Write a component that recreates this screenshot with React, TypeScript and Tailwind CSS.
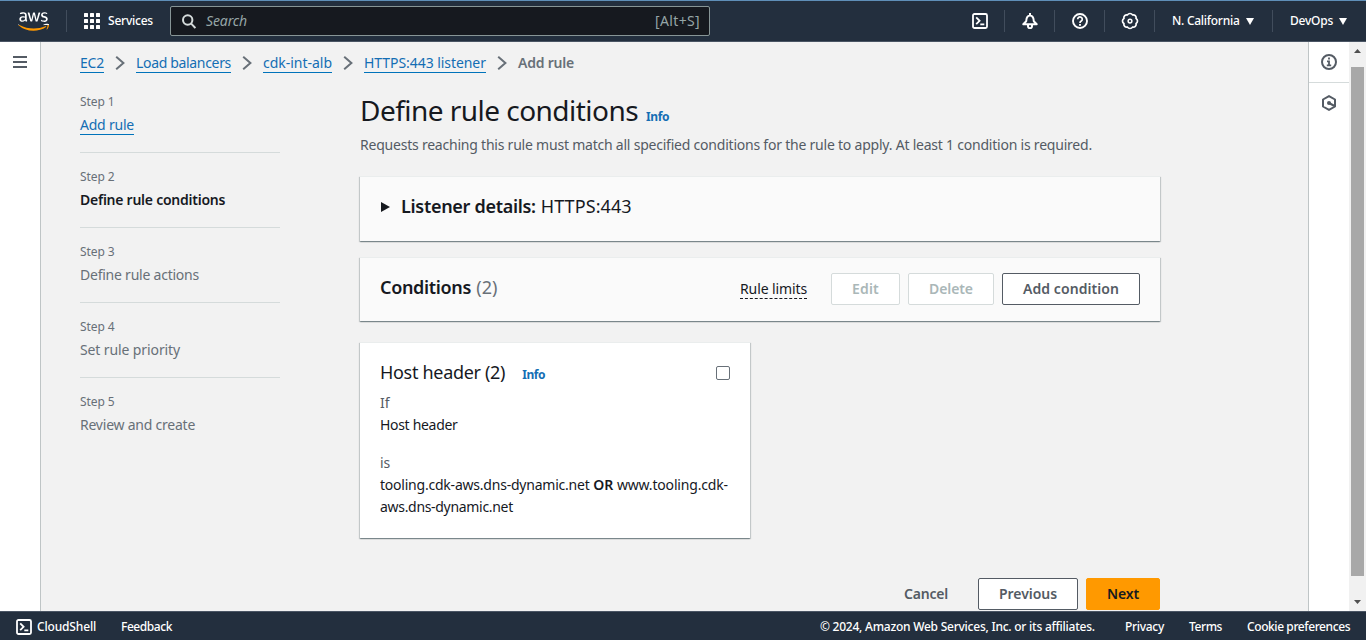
import type { ReactNode } from "react";
import { FaAws } from "react-icons/fa";

const ChevronRight = () => (
  <svg className="mx-[11px] h-[14px] w-[10px] shrink-0" viewBox="0 0 10 14" fill="none" stroke="#687078" strokeWidth="2">
    <path d="M1.2 0.8 8.4 7 1.2 13.2" />
  </svg>
);

const ShellIcon = () => (
  <svg className="h-4 w-4 shrink-0" viewBox="0 0 16 16" fill="none" stroke="currentColor" strokeWidth="1.8">
    <rect x="1" y="1" width="14" height="14" rx="1.5" />
    <path d="M4.2 4.4 7.6 7.8 4.2 11.2M8.3 11.4h4" />
  </svg>
);

const BellIcon = () => (
  <svg className="h-4 w-4" viewBox="0 0 16 16" fill="none" stroke="currentColor" strokeWidth="2" strokeLinejoin="round">
    <path d="M8 0v2.4M1.3 11.2h13.4L11.8 8.2C11.6 4.6 10.2 2.6 8 2.6S4.4 4.6 4.2 8.2L1.3 11.2Z" />
    <path d="M6 12v1.2a2 2 0 0 0 4 0V12" />
  </svg>
);

const HelpIcon = () => (
  <svg className="h-4 w-4" viewBox="0 0 16 16" fill="none" stroke="currentColor" strokeWidth="1.9">
    <circle cx="8" cy="8" r="7" />
    <path d="M5.7 6.3a2.3 2.3 0 1 1 3.6 1.8C8.4 8.6 8 8.9 8 9.9" strokeWidth="1.7" />
    <path d="M8 10.9v1.8" />
  </svg>
);

const GearIcon = () => (
  <svg className="h-[18px] w-[18px]" viewBox="0 0 24 24" fill="none" stroke="currentColor" strokeWidth="2.3">
    <path d="M3.85 8.62a4 4 0 0 1 4.78-4.77 4 4 0 0 1 6.74 0 4 4 0 0 1 4.78 4.78 4 4 0 0 1 0 6.74 4 4 0 0 1-4.77 4.78 4 4 0 0 1-6.75 0 4 4 0 0 1-4.78-4.77 4 4 0 0 1 0-6.76Z" />
    <circle cx="12" cy="12" r="2.5" strokeWidth="2" />
  </svg>
);

const InfoIcon = () => (
  <svg className="h-4 w-4" viewBox="0 0 16 16" fill="none" stroke="#545b64" strokeWidth="2">
    <circle cx="8" cy="8" r="7" />
    <path d="M8 3.6v2M6 7.4h2v3.8M5.8 11.4h4.4" strokeWidth="1.8" />
  </svg>
);

const HexagonIcon = () => (
  <svg className="h-4 w-4" viewBox="0 0 16 16" fill="none" stroke="#545b64" strokeWidth="2" strokeLinejoin="round">
    <path d="M8 1.1 14 4.5v7L8 14.9 2 11.5v-7Z" />
    <path d="M8 8l5.5 3" />
    <circle cx="8" cy="8" r="2" fill="#545b64" stroke="none" />
  </svg>
);

const CaretDown = () => (
  <svg className="h-[7px] w-2" viewBox="0 0 8 7" fill="currentColor">
    <path d="M0 0h8L4 7Z" />
  </svg>
);

const Divider = () => <span className="h-[22px] w-px shrink-0 bg-[#414d5c]" />;

const Slot = ({ children }: { children: ReactNode }) => (
  <button className="flex h-full w-[49px] items-center justify-center">{children}</button>
);

const AwsLogo = () => (
  <div className="flex w-[31px] flex-col">
    <div className="h-[16px] overflow-hidden text-white">
      <FaAws className="h-[25px] w-[31px]" />
    </div>
    <div className="h-[9px] overflow-hidden text-[#f90]">
      <FaAws className="-mt-[16px] h-[25px] w-[31px]" />
    </div>
  </div>
);

const Header = () => (
  <header className="flex h-[42px] shrink-0 items-center border-t border-b border-t-[#5f8fb8] border-b-[#4a5564] bg-[#232f3e] text-[12px] font-medium text-white">
    <div className="flex w-[66px] justify-center">
      <AwsLogo />
    </div>
    <Divider />
    <button className="ml-[17px] flex items-center gap-2">
      <svg className="h-4 w-4" viewBox="0 0 16 16" fill="currentColor">
        {[0, 6, 12].map((y) =>
          [0, 6, 12].map((x) => <rect key={`${x}-${y}`} x={x} y={y} width="4" height="4" rx="0.5" />),
        )}
      </svg>
      <span className="w-[62px] text-left tracking-[-0.22px]">Services</span>
    </button>
    <div className="flex h-[30px] w-[540px] items-center rounded-[2px] border border-[#879596] bg-[#16191f] pr-[9px] pb-px pl-[11px] text-[14px] font-normal text-[#95a5a6]">
      <svg className="mt-px h-[15px] w-[14px] text-[#d5dbdb]" viewBox="0 0 14 15" fill="none" stroke="currentColor" strokeWidth="2">
        <circle cx="5.7" cy="6" r="4.7" />
        <path d="M9.2 9.6 13.4 14" />
      </svg>
      <span className="ml-[10px] tracking-[-0.12px] italic">Search</span>
      <span className="ml-auto tracking-[0.35px]">[Alt+S]</span>
    </div>
    <nav className="ml-auto flex h-full items-center">
      <Slot><ShellIcon /></Slot>
      <Divider />
      <Slot><BellIcon /></Slot>
      <Divider />
      <Slot><HelpIcon /></Slot>
      <Divider />
      <Slot><GearIcon /></Slot>
      <Divider />
      <button className="flex w-[117px] items-center pl-[17px]">
        <span className="w-[74px] text-left tracking-[-0.27px]">N. California</span>
        <CaretDown />
      </button>
      <Divider />
      <button className="flex w-[93px] items-center pl-[17px]">
        <span className="w-[49px] text-left tracking-[-0.24px]">DevOps</span>
        <CaretDown />
      </button>
    </nav>
  </header>
);

const linkClass = "block h-[21px] self-start border-b border-[#0073bb] text-[#146eb4]";

const Breadcrumbs = () => (
  <nav className="flex h-[22px] items-center text-[14px] leading-[22px]">
    <a className={`${linkClass} w-[24px] tracking-[-0.21px]`}>EC2</a>
    <ChevronRight />
    <a className={`${linkClass} w-[95px] tracking-[-0.33px]`}>Load balancers</a>
    <ChevronRight />
    <a className={`${linkClass} w-[69px] tracking-[-0.02px]`}>cdk-int-alb</a>
    <ChevronRight />
    <a className={`${linkClass} w-[122px] tracking-[-0.06px] whitespace-nowrap`}>HTTPS:443 listener</a>
    <ChevronRight />
    <span className="font-semibold tracking-[-0.21px] text-[#687078]">Add rule</span>
  </nav>
);

const steps = [
  { name: "Add rule", style: "border-b border-[#0073bb] text-[#146eb4] tracking-[-0.22px]" },
  { name: "Define rule conditions", style: "font-semibold text-[#16191f] tracking-[-0.25px]" },
  { name: "Define rule actions", style: "text-[#687078] tracking-[-0.23px]" },
  { name: "Set rule priority", style: "text-[#687078] tracking-[-0.11px]" },
  { name: "Review and create", style: "text-[#687078] tracking-[-0.23px]" },
];

const Steps = () => (
  <ol className="w-[200px] shrink-0">
    {steps.map((step, i) => (
      <li key={step.name} className="h-[75px] border-b border-[#d5dbdb] pt-4 last:border-b-0">
        <div className="text-[12px] leading-4 tracking-[-0.09px] text-[#687078]">Step {i + 1}</div>
        <div className="mt-1 h-[22px] text-[14px] leading-[22px]">
          <span className={`inline-block h-[21px] ${step.style}`}>{step.name}</span>
        </div>
      </li>
    ))}
  </ol>
);

const cardShadow =
  "border-t border-[#eaeded] shadow-[0_1px_1px_0_rgba(0,28,36,0.3),1px_1px_1px_0_rgba(0,28,36,0.15),-1px_1px_1px_0_rgba(0,28,36,0.15)]";

const InfoLink = ({ className }: { className: string }) => (
  <a className={`text-[12px] font-bold tracking-[-0.4px] text-[#146eb4] ${className}`}>Info</a>
);

const buttonClass = "h-8 rounded-[2px] border pb-[2px] text-[14px] font-semibold";

const Main = () => (
  <main className="w-[800px] shrink-0 pt-[14px] text-[#16191f]">
    <h1 className="flex h-9 items-baseline text-[28px] leading-9 tracking-[-0.53px]">
      Define rule conditions
      <InfoLink className="ml-[8px]" />
    </h1>
    <p className="mt-[6px] text-[14px] leading-[22px] tracking-[-0.22px] whitespace-nowrap text-[#545b64]">
      Requests reaching this rule must match all specified conditions for the rule to apply. At least 1 condition is
      required.
    </p>

    <section className={`mt-[20px] flex h-[65px] items-center bg-[#fafafa] pb-[6px] pl-[21px] text-[18px] ${cardShadow}`}>
      <svg className="mt-[2px] mr-[11px] h-[10px] w-[9px]" viewBox="0 0 9 10" fill="#16191f">
        <path d="M0 0 9 5 0 10Z" />
      </svg>
      <span className="font-semibold tracking-[-0.3px]">Listener details:</span>
      <span className="ml-[5px] tracking-[0.09px]">HTTPS:443</span>
    </section>

    <section className={`mt-[16px] flex h-[64px] items-start bg-[#fafafa] px-5 pt-[15px] ${cardShadow}`}>
      <h2 className="text-[18px] leading-[28px] font-semibold tracking-[-0.33px]">
        Conditions <span className="ml-px font-normal tracking-normal text-[#687078]">(2)</span>
      </h2>
      <div className="ml-auto flex items-center">
        <span className="mr-6 h-[19px] border-b border-dashed border-[#16191f] text-[14px] leading-[18px] tracking-[-0.11px]">
          Rule limits
        </span>
        <button className={`${buttonClass} mr-2 w-[69px] border-[#d5dbdb] bg-white tracking-[0.2px] text-[#aab7b8]`}>Edit</button>
        <button className={`${buttonClass} mr-2 w-[86px] border-[#d5dbdb] bg-white tracking-[-0.08px] text-[#aab7b8]`}>Delete</button>
        <button className={`${buttonClass} w-[138px] border-[#545b64] bg-white tracking-[0.07px] text-[#545b64]`}>Add condition</button>
      </div>
    </section>

    <section className={`mt-[21px] h-[196px] w-[390px] bg-white px-5 pt-[19px] text-[14px] leading-[22px] ${cardShadow}`}>
      <div className="flex h-[22px] items-center">
        <h3 className="flex items-baseline text-[18px] leading-[22px] tracking-[-0.31px]">
          Host header (2)
          <InfoLink className="ml-[17px]" />
        </h3>
        <span className="ml-auto h-[14px] w-[14px] rounded-[2px] border border-[#687078] bg-white" />
      </div>
      <div className="mt-2 text-[#545b64]">If</div>
      <div className="tracking-[-0.31px]">Host header</div>
      <div className="mt-4 text-[#545b64]">is</div>
      <div className="whitespace-nowrap">
        <span className="tracking-[-0.22px]">tooling.cdk-aws.dns-dynamic.net</span> <b className="font-semibold">OR</b>{" "}
        <span className="tracking-[-0.17px]">www.tooling.cdk-</span>
        <br />
        <span className="tracking-[-0.31px]">aws.dns-dynamic.net</span>
      </div>
    </section>

    <div className="mt-10 flex items-center justify-end">
      <button className="mr-[30px] pb-[2px] text-[14px] font-semibold tracking-[-0.2px] text-[#545b64]">Cancel</button>
      <button className={`${buttonClass} mr-2 w-[100px] border-[#545b64] bg-white tracking-[-0.05px] text-[#545b64]`}>Previous</button>
      <button className={`${buttonClass} w-[74px] border-[#f90] bg-[#f90] tracking-[-0.13px] text-[#16191f]`}>Next</button>
    </div>
  </main>
);

const Scrollbar = () => (
  <div className="flex w-[17px] shrink-0 flex-col items-center bg-[#f1f1f1]">
    <svg className="mt-[7px] h-1 w-[7px]" viewBox="0 0 7 4" fill="#505050">
      <path d="M0 4 3.5 0 7 4Z" />
    </svg>
    <div className="mt-[14px] h-[509px] w-[13px] bg-[#a8a8a8]" />
    <svg className="mt-6 h-1 w-[7px]" viewBox="0 0 7 4" fill="#505050">
      <path d="M0 0h7L3.5 4Z" />
    </svg>
  </div>
);

const Footer = () => (
  <footer className="flex h-[29px] shrink-0 items-center border-t border-[#4a5564] bg-[#232f3e] px-4 pt-[2px] text-[12px] font-medium text-white">
    <ShellIcon />
    <span className="ml-[5px] w-[84px] tracking-[-0.16px]">CloudShell</span>
    <span className="tracking-[-0.43px]">Feedback</span>
    <span className="ml-auto w-[305px] tracking-[-0.24px] whitespace-nowrap">
      © 2024, Amazon Web Services, Inc. or its affiliates.
    </span>
    <span className="w-[64px] tracking-[-0.29px]">Privacy</span>
    <span className="w-[58px] tracking-[-0.41px]">Terms</span>
    <span className="w-[103px] tracking-[-0.41px] whitespace-nowrap">Cookie preferences</span>
  </footer>
);

export default function App() {
  return (
    <div className="flex h-[640px] w-[1366px] flex-col overflow-hidden bg-[#f2f2f2] font-['Noto_Sans','Open_Sans',sans-serif]">
      <Header />
      <div className="flex min-h-0 flex-1">
        <aside className="w-[41px] shrink-0 border-r border-[#bfc5c6] bg-white pt-[14px] pl-[13px]">
          <svg className="h-3 w-[14px]" viewBox="0 0 14 12" fill="#545b64">
            <path d="M0 0h14v2H0zM0 5h14v2H0zM0 10h14v2H0z" />
          </svg>
        </aside>
        <div className="flex-1 overflow-hidden pt-[10px] pl-[39px]">
          <Breadcrumbs />
          <div className="mt-1 flex gap-20">
            <Steps />
            <Main />
          </div>
        </div>
        <aside className="w-[41px] shrink-0 border-l border-[#bfc5c6] bg-white">
          <div className="flex h-[41px] items-center justify-center border-b border-[#d5dbdb]"><InfoIcon /></div>
          <div className="flex h-[40px] items-center justify-center"><HexagonIcon /></div>
        </aside>
        <Scrollbar />
      </div>
      <Footer />
    </div>
  );
}
